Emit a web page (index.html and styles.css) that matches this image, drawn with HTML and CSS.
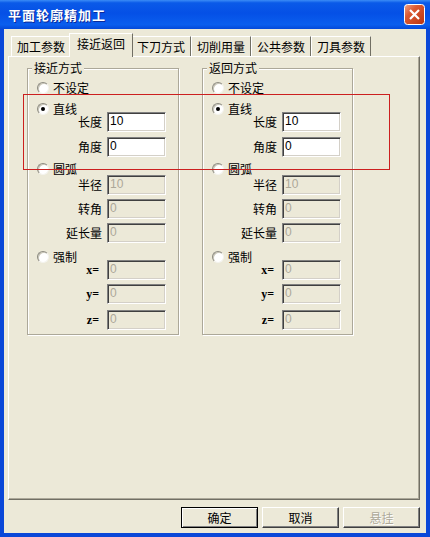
FILE: index.html
```html
<!DOCTYPE html>
<html lang="zh-CN">
<head>
  <meta charset="UTF-8">
  <meta name="viewport" content="width=device-width, initial-scale=1.0">
  <title>平面轮廓精加工</title>
  <link rel="stylesheet" href="styles.css">
</head>
<body>
  <div class="window">
    <div class="titlebar">
      <span class="title">平面轮廓精加工</span>
      <span class="close">
        <svg width="21" height="21" viewBox="0 0 21 21">
          <defs>
            <linearGradient id="cg" x1="0" y1="0" x2="1" y2="1">
              <stop offset="0" stop-color="#f0a488"/>
              <stop offset="0.35" stop-color="#dc5a33"/>
              <stop offset="1" stop-color="#b9330f"/>
            </linearGradient>
          </defs>
          <rect x="0.5" y="0.5" width="20" height="20" rx="3" fill="url(#cg)" stroke="#fff"/>
          <path d="M6 6 L15 15 M15 6 L6 15" stroke="#fff" stroke-width="2.2"/>
        </svg>
      </span>
    </div>

    <div class="client">
      <div class="tabs">
        <div class="tab">加工参数</div>
        <div class="tab active">接近返回</div>
        <div class="tab">下刀方式</div>
        <div class="tab">切削用量</div>
        <div class="tab">公共参数</div>
        <div class="tab">刀具参数</div>
      </div>

      <div class="panel">
        <fieldset class="group">
          <legend>接近方式</legend>
          <div class="opt"><input type="radio" name="in"> 不设定</div>
          <div class="opt mt7"><input type="radio" name="in" checked> 直线</div>
          <div class="field up4"><label>长度</label><input type="text" value="10"></div>
          <div class="field mt5"><label>角度</label><input type="text" value="0"></div>
          <div class="opt mt5"><input type="radio" name="in"> 圆弧</div>
          <div class="field up1"><label>半径</label><input type="text" value="10" disabled></div>
          <div class="field mt4"><label>转角</label><input type="text" value="0" disabled></div>
          <div class="field mt4"><label>延长量</label><input type="text" value="0" disabled></div>
          <div class="opt mt7"><input type="radio" name="in"> 强制</div>
          <div class="field up4"><label class="xyz">x=</label><input type="text" value="0" disabled></div>
          <div class="field mt4"><label class="xyz">y=</label><input type="text" value="0" disabled></div>
          <div class="field mt6"><label class="xyz">z=</label><input type="text" value="0" disabled></div>
        </fieldset>

        <fieldset class="group">
          <legend>返回方式</legend>
          <div class="opt"><input type="radio" name="out"> 不设定</div>
          <div class="opt mt7"><input type="radio" name="out" checked> 直线</div>
          <div class="field up4"><label>长度</label><input type="text" value="10"></div>
          <div class="field mt5"><label>角度</label><input type="text" value="0"></div>
          <div class="opt mt5"><input type="radio" name="out"> 圆弧</div>
          <div class="field up1"><label>半径</label><input type="text" value="10" disabled></div>
          <div class="field mt4"><label>转角</label><input type="text" value="0" disabled></div>
          <div class="field mt4"><label>延长量</label><input type="text" value="0" disabled></div>
          <div class="opt mt7"><input type="radio" name="out"> 强制</div>
          <div class="field up4"><label class="xyz">x=</label><input type="text" value="0" disabled></div>
          <div class="field mt4"><label class="xyz">y=</label><input type="text" value="0" disabled></div>
          <div class="field mt6"><label class="xyz">z=</label><input type="text" value="0" disabled></div>
        </fieldset>
      </div>

      <div class="buttons">
        <button class="btn default">确定</button>
        <button class="btn">取消</button>
        <button class="btn" disabled>悬挂</button>
      </div>
    </div>

    <div class="mark"></div>
  </div>
</body>
</html>
```

FILE: styles.css
```css
body {
  margin: 0;
  background: #fff;
  font-family: "Noto Sans CJK SC", sans-serif;
  font-size: 12px;
  color: #000;
}
.window {
  width: 430px;
  height: 537px;
  position: relative;
  display: flex;
  flex-direction: column;
  background: #ece9d8;
}
.titlebar {
  height: 29px;
  flex: none;
  display: flex;
  align-items: center;
  justify-content: space-between;
  padding: 0 5px 0 8px;
  background: linear-gradient(to bottom, #3b8cf6 0%, #0a5ae8 10%, #0550e6 45%, #0a5eee 85%, #0449d9 100%);
}
.title {
  color: #fff;
  font-weight: bold;
  font-size: 13px;
  letter-spacing: 1px;
  text-shadow: 1px 1px 0 #0b2a9a;
}
.close {
  display: flex;
}
.client {
  flex: 1;
  display: flex;
  flex-direction: column;
  border: 4px solid #0a47d8;
  border-top: 0;
  padding: 4px 6px 0 4px;
}
.tabs {
  height: 23px;
  flex: none;
  display: flex;
  align-items: flex-end;
  padding-left: 3px;
}
.tab {
  width: 60px;
  height: 20px;
  box-sizing: border-box;
  border-top: 1px solid #fff;
  border-left: 1px solid #fff;
  border-right: 1px solid #716f64;
  text-align: center;
  line-height: 19px;
}
.tab.active {
  width: 64px;
  height: 24px;
  margin: 0 -2px -1px;
  position: relative;
  z-index: 1;
  background: #ece9d8;
  line-height: 19px;
}
.panel {
  height: 444px;
  flex: none;
  box-sizing: border-box;
  border: 1px solid;
  border-color: #fff #716f64 #716f64 #fff;
  box-shadow: inset -1px -1px 0 #aca899;
  padding: 4px 0 0 18px;
  display: flex;
  align-items: flex-start;
  gap: 23px;
}
.group {
  margin: 0;
  padding: 6px 0 4px;
  width: 152px;
  box-sizing: border-box;
  border: 1px solid #aca899;
  box-shadow: inset 1px 1px 0 #fff, 1px 1px 0 #fff;
}
.group + .group {
  width: 151px;
}
.group legend {
  padding: 0 2px;
  margin-left: 4px;
  line-height: 14px;
  background: #ece9d8;
}
.opt {
  height: 14px;
  display: flex;
  align-items: center;
  gap: 4px;
  padding-left: 9px;
  line-height: 14px;
}
.opt input {
  appearance: none;
  margin: 0;
  width: 12px;
  height: 12px;
  box-sizing: border-box;
  border-radius: 50%;
  border: 1px solid;
  border-color: #8d8b80 #f4f3ee #f4f3ee #8d8b80;
  background: #fff;
  box-shadow: inset 1px 1px 0 #c9c6b8;
  position: relative;
}
.opt input:checked::after {
  content: "";
  position: absolute;
  left: 3px;
  top: 3px;
  width: 4px;
  height: 4px;
  border-radius: 50%;
  background: #000;
}
.field {
  height: 20px;
  display: flex;
  align-items: center;
}
.field label {
  width: 74px;
  margin-right: 5px;
  text-align: right;
  line-height: 14px;
}
.field label.xyz {
  width: 71px;
  margin-right: 8px;
  font-family: "Liberation Serif", serif;
  font-weight: bold;
  font-size: 12px;
}
.field input {
  width: 59px;
  height: 20px;
  box-sizing: border-box;
  margin: 0;
  padding: 0 2px 3px;
  border: 1px solid;
  border-color: #808080 #fff #fff #808080;
  box-shadow: inset 1px 1px 0 #404040, inset -1px -1px 0 #d4d0c8;
  background: #fff;
  font-family: "Liberation Sans", sans-serif;
  font-size: 12px;
  color: #000;
  outline: none;
}
.field input:disabled {
  background: #ece9d8;
  color: #aca899;
}
.mt4 { margin-top: 4px; }
.mt5 { margin-top: 5px; }
.mt6 { margin-top: 6px; }
.mt7 { margin-top: 7px; }
.up1 { margin-top: -1px; }
.up4 { margin-top: -4px; }
.buttons {
  display: flex;
  justify-content: flex-end;
  gap: 4px;
  margin-top: 7px;
}
.btn {
  width: 77px;
  height: 21px;
  padding: 0;
  background: #ece9d8;
  border: 1px solid;
  border-color: #fff #404040 #404040 #fff;
  box-shadow: inset -1px -1px 0 #808080;
  font-family: "Noto Sans CJK SC", sans-serif;
  font-size: 12px;
  color: #000;
}
.btn.default {
  border-color: #000;
  box-shadow: inset 1px 1px 0 #fff, inset -1px -1px 0 #808080;
}
.btn:disabled {
  color: #aca899;
  text-shadow: 1px 1px 0 #fff;
}
.mark {
  position: absolute;
  left: 23px;
  top: 94px;
  width: 367px;
  height: 76px;
  box-sizing: border-box;
  border: 1px solid #cc1f1f;
}
```
